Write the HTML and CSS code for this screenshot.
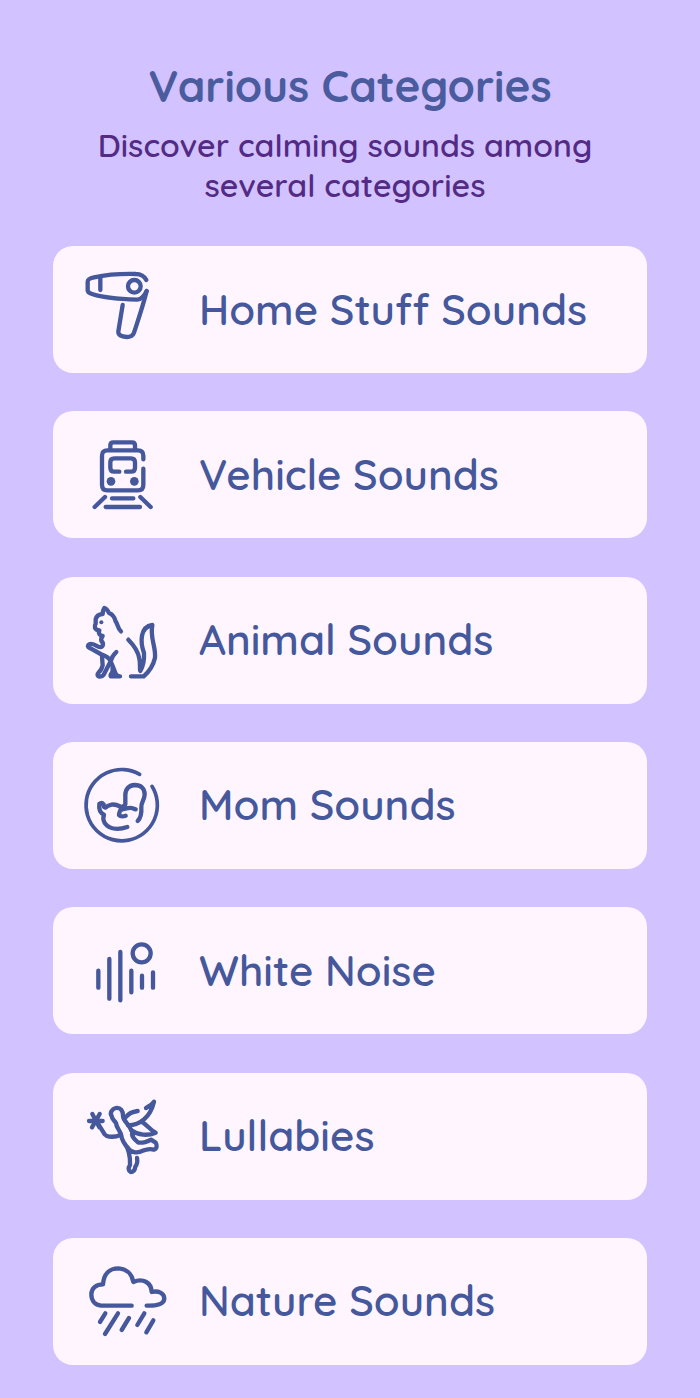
FILE: index.html
```
<!DOCTYPE html>
<html lang="en">
<head>
    <meta charset="UTF-8">
    <meta name="viewport" content="width=device-width, initial-scale=1.0">
    <title>Various Categories</title>

    <link rel="stylesheet" href="styles.css">
</head>
<body>

    <header>
        <h1>Various Categories</h1>
        <p>Discover calming sounds among several categories</p>
    </header>

    <main class="category-list">
        <a class="category-card" href="#home">
            <!-- Hair dryer -->
            <svg class="icon" viewBox="0 7 330 285" aria-hidden="true">
                <path d="M229 61C224 50 211 43 198 43C160 42 105 46 72 53Q53 57 53 66V92Q53 99 66 103C105 116 150 118 202 120Q218 119 230 94"/>
                <path d="M91 53V91M230 94C219 139 205 179 192 219Q187 232 170 232Q144 231 145 215L158 136"/>
                <circle cx="193" cy="80" r="19"/>
            </svg>
            <span>Home Stuff Sounds</span>
        </a>
        <a class="category-card" href="#vehicle">
            <!-- Train -->
            <svg class="icon" viewBox="0 5 330 285" aria-hidden="true">
                <path d="M220 102V91Q220 75 204 75H112Q96 75 96 91V178Q96 195 112 195H204Q220 195 220 178V130"/>
                <path d="M121 72V60Q121 51 130 51H186Q195 51 195 60V72"/>
                <path d="M148 139H133Q121 139 121 127V111Q121 99 133 99H183Q195 99 195 111V127Q195 139 183 139H168"/>
                <path d="M126 219H190M107 245H210M105 215L74 245M211 215L242 245"/>
                <circle class="fill" cx="123" cy="168" r="13"/>
                <circle class="fill" cx="193" cy="168" r="13"/>
            </svg>
            <span>Vehicle Sounds</span>
        </a>
        <a class="category-card" href="#animal">
            <!-- Squirrel -->
            <svg class="icon" viewBox="0 -7 330 285" aria-hidden="true">
                <path d="M153 108C142 99 144 87 137 78C133 63 126 56 117 53C114 46 109 40 103 38Q98 45 98 56C85 57 79 63 77 72V85Q73 91 75 98Q78 104 88 105C84 115 90 121 98 122Q92 129 94 137Q101 143 98 151Q94 159 83 153C73 147 60 143 55 149Q50 156 63 160L92 176Q116 184 122 198Q131 218 137 236"/>
                <path d="M139 170Q125 183 122 198L101 238Q96 245 86 243Q79 239 86 231Q94 226 98 210L96 183M150 243H122Q120 235 132 229"/>
                <path d="M175 133C193 151 205 170 208 190C212 206 208 219 211 227C220 212 223 190 222 173C210 139 210 95 247 89C239 129 258 151 255 187Q248 219 221 243H183"/>
                <path class="fill" d="M122 205L138 229L151 239V248H122Q114 240 121 229Z"/>
                <circle class="fill" cx="94" cy="81" r="6"/>
            </svg>
            <span>Animal Sounds</span>
        </a>
        <a class="category-card" href="#mom">
            <!-- Baby in the womb -->
            <svg class="icon" viewBox="-1 -3 330 285" aria-hidden="true">
                <path class="thin" d="M208 46A107 107 0 1 0 245 82"/>
                <path d="M202 186C211 177 214 160 213 145C211 132 223 122 223 106C223 87 211 78 193 78C175 79 165 91 165 109V136C153 146 147 154 146 168Q152 175 166 170M150 153C164 151 174 144 184 147L196 151M164 148C148 143 139 134 124 137Q111 140 105 146Q99 145 100 136Q94 129 87 135C85 150 88 161 101 167Q96 179 103 192C118 213 147 212 171 204"/>
            </svg>
            <span>Mom Sounds</span>
        </a>
        <a class="category-card" href="#noise">
            <!-- Sound bars -->
            <svg class="icon" viewBox="0 -21 330 285" aria-hidden="true">
                <path class="bars" d="M85 122V173M118 87V206M151 66V211M184 122V187M216 137V173M249 127V173"/>
                <circle cx="215" cy="70" r="27"/>
            </svg>
            <span>White Noise</span>
        </a>
        <a class="category-card" href="#lullabies">
            <!-- Fairy -->
            <svg class="icon" viewBox="0 -3 330 285" aria-hidden="true">
                <path d="M57 93H98M67 72L88 112M89 72L66 112M80 94L104 133"/>
                <path d="M109 137C124 143 139 140 153 134C150 121 139 114 138 99C133 90 126 89 125 78C118 68 127 57 137 54C152 51 160 64 159 78C160 92 171 98 177 108L190 132"/>
                <path d="M167 82C175 71 187 65 203 63M174 106C211 105 241 81 252 35Q245 46 228 54M218 97C231 105 239 119 257 128C234 138 204 136 184 121"/>
                <path d="M153 134C156 152 163 163 175 175C185 190 205 190 219 182C230 179 239 174 252 179C261 176 262 166 257 158L243 149C230 155 216 161 204 157C194 149 187 143 186 133M164 161C178 179 181 200 180 225Q171 239 182 246Q194 246 196 230Q204 220 201 204"/>
            </svg>
            <span>Lullabies</span>
        </a>
        <a class="category-card" href="#nature">
            <!-- Rain cloud -->
            <svg class="icon" viewBox="1 -2 330 285" aria-hidden="true">
                <path d="M186 153H94C76 151 65 138 65 119C65 101 79 89 100 89C102 59 119 41 146 41C170 42 187 58 191 82C219 69 245 83 246 112C266 107 284 115 284 132C283 148 263 154 231 153"/>
                <path d="M107 176L91 202M145 176L106 238M178 190L156 226M224 176L203 211M251 197L230 233"/>
            </svg>
            <span>Nature Sounds</span>
        </a>
    </main>

</body>
</html>
```
FILE: styles.css
```
* {
    margin: 0;
    padding: 0;
    box-sizing: border-box;
}

body {
    display: flex;
    flex-direction: column;
    min-height: 100vh;
    padding: 56px 53px 33px;
    font-family: Quicksand, Inter, sans-serif;
    background-color: #d2c2ff;
}

/* Heading */
header {
    margin-bottom: 40px;
    text-align: center;
}

header h1 {
    margin-bottom: 9px;
    font-size: 44px;
    font-weight: 700;
    line-height: 60px;
    color: #4a5c9e;
}

header p {
    padding: 0 42px 1px 32px;
    font-size: 32px;
    font-weight: 600;
    line-height: 40px;
    color: #542b84;
}

/* Category list */
.category-list {
    display: flex;
    flex: 1;
    flex-direction: column;
    justify-content: space-between;
    gap: 24px;
}

.category-card {
    display: flex;
    align-items: center;
    gap: 19px;
    padding: 16px 17px;
    border-radius: 20px;
    background-color: #fff5ff;
    font-size: 42px;
    font-weight: 600;
    line-height: 48px;
    color: #45589c;
    text-decoration: none;
}

/* Icons */
.icon {
    flex-shrink: 0;
    width: 110px;
    height: 95px;
    fill: none;
    stroke: #45589c;
    stroke-width: 13;
    stroke-linecap: round;
    stroke-linejoin: round;
}

.icon .thin {
    stroke-width: 11;
}

.icon .fill {
    fill: #45589c;
    stroke: none;
}
```
